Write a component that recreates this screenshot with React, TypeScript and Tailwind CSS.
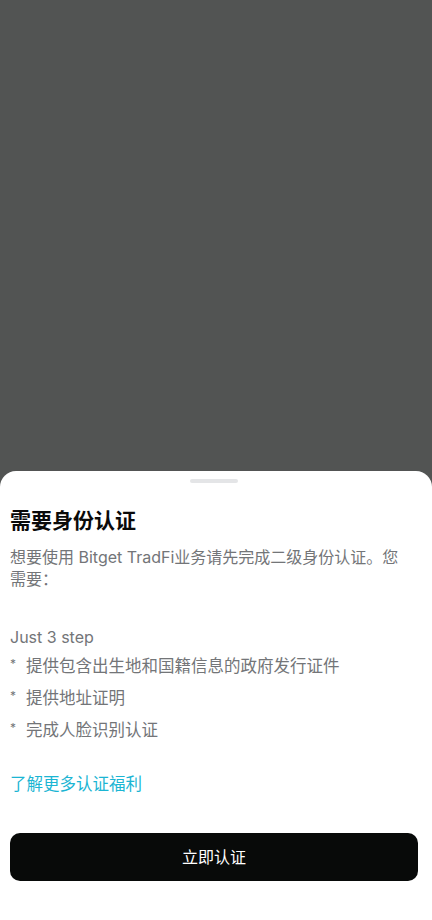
import React from 'react';

const steps = ['提供包含出生地和国籍信息的政府发行证件', '提供地址证明', '完成人脸识别认证'];

export default function App() {
  return (
    <div
      className="h-[920px] w-full flex flex-col bg-[#525453] overflow-hidden"
      style={{ fontFamily: 'Inter, "Noto Sans CJK SC", sans-serif' }}
    >
      {/* dimmed page behind the sheet */}
      <div className="flex-1" />

      {/* Bottom sheet */}
      <div className="bg-white rounded-t-[16px] pl-[10px] pr-[14px] pt-2 pb-[39px] flex flex-col">
        <div className="ml-[180px] w-12 h-1 rounded-full bg-[#e4e5e7]" />

        <h2 className="mt-6 text-[21px] leading-[28px] font-bold text-[#0a0a0a]">需要身份认证</h2>

        <p className="mt-3 mr-2 text-[16px] leading-[21px] text-[#737578]">
          想要使用 Bitget TradFi业务请先完成二级身份认证。您
          <span className="[font-family:'Noto_Sans_CJK_SC',sans-serif]">需要：</span>
        </p>

        <div className="mt-[35px] text-[16px] leading-6 text-[#737578]">Just 3 step</div>

        <ul className="mt-[5px] flex flex-col gap-2">
          {steps.map((s) => (
            <li key={s} className="flex items-center text-[16.5px] leading-6 text-[#737578]">
              <span className="w-4 text-[12px] leading-none -mt-1">*</span>
              <span>{s}</span>
            </li>
          ))}
        </ul>

        <a className="mt-[30px] text-[16.5px] leading-6 text-[#1bb5d3]">了解更多认证福利</a>

        <button className="mt-[37px] h-12 w-full rounded-[10px] bg-[#080a09] text-white text-[16px]">
          立即认证
        </button>
      </div>
    </div>
  );
}
